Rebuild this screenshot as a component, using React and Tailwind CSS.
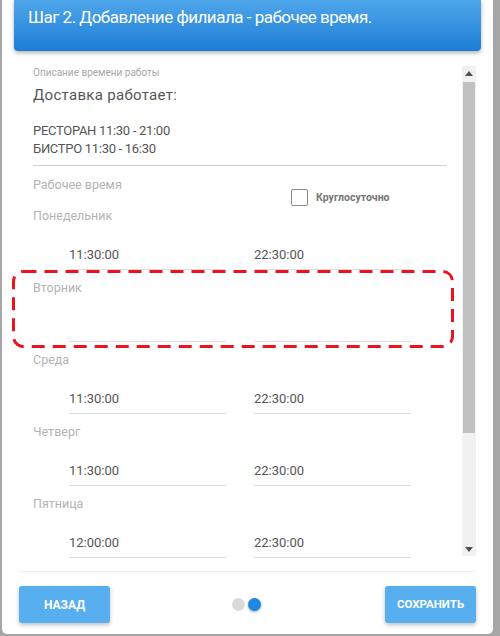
import React from 'react';

const days = [
    { name: 'Понедельник', from: '11:30:00', to: '22:30:00' },
    { name: 'Вторник', from: '', to: '' },
    { name: 'Среда', from: '11:30:00', to: '22:30:00' },
    { name: 'Четверг', from: '11:30:00', to: '22:30:00' },
    { name: 'Пятница', from: '12:00:00', to: '22:30:00' },
];

const DayRow = ({ day, first }) => (
    <div className={first ? '' : 'mt-[9px]'}>
        <div className="text-[12.5px] leading-[18px] text-[#b3b3b3]">{day.name}</div>
        <div className="mt-[16px] flex pl-[36px] gap-[28px]">
            <div className="w-[157px] h-[29px] border-b border-[#dcdcdc] text-[13px] leading-[28px] text-[#555]">{day.from}</div>
            <div className="w-[157px] h-[29px] border-b border-[#dcdcdc] text-[13px] leading-[28px] text-[#555]">{day.to}</div>
        </div>
    </div>
);

const App = () => {
    return (
        <div className="w-[500px] h-[636px] bg-[#a6a6a6] overflow-hidden flex" style={{ fontFamily: 'Roboto, "Noto Sans", sans-serif' }}>
            <div className="ml-[2px] w-[491px] h-[634px] bg-white rounded-b-[5px] relative flex flex-col">
                {/* header */}
                <div className="mx-[12px] h-[51px] rounded-b-[4px] bg-gradient-to-b from-[#4ea6ea] to-[#1a7dd5] shadow-[0_2px_4px_rgba(0,0,0,0.3)] px-[14px] pt-[5px]">
                    <div className="text-[17px] leading-[24px] tracking-[-0.5px] text-white">Шаг 2. Добавление филиала - рабочее время.</div>
                </div>

                {/* body */}
                <div className="mt-[11px] h-[498px] flex overflow-hidden relative">
                    <div className="ml-[31px] w-[414px] pt-[4px]">
                        <div className="text-[10px] leading-[14px] text-[#a8a8a8]">Описание времени работы</div>
                        <div className="mt-[6px] pb-[7px] border-b border-[#cfcfcf] leading-[18px] text-[#555]">
                            <div className="text-[15px] tracking-[0.3px]">Доставка работает:</div>
                            <div className="h-[18px]" />
                            <div className="text-[13px] tracking-[-0.3px]">РЕСТОРАН 11:30 - 21:00</div>
                            <div className="text-[13px] tracking-[-0.3px]">БИСТРО 11:30 - 16:30</div>
                        </div>
                        <div className="mt-[10px] flex items-start">
                            <div className="w-[258px] text-[12.5px] leading-[18px] text-[#b3b3b3]">Рабочее время</div>
                            <div className="mt-[13px] flex items-center">
                                <div className="w-[17px] h-[17px] border border-[#8a8a8a] rounded-[2px]" />
                                <span className="ml-[8px] text-[10.5px] font-bold text-[#747474]">Круглосуточно</span>
                            </div>
                        </div>
                        <div className="mt-[1px]">
                            {days.map((d, i) => (
                                <DayRow key={d.name} day={d} first={i === 0} />
                            ))}
                        </div>
                    </div>

                    {/* scrollbar */}
                    <div className="ml-[15px] mt-[4px] w-[14px] h-[490px] bg-[#f1f1f1] flex flex-col items-center">
                        <div className="h-[14px] flex items-center justify-center">
                            <svg width="8" height="5" viewBox="0 0 8 5"><path d="M4 0 L8 5 L0 5 Z" fill="#505050" /></svg>
                        </div>
                        <div className="mt-[2px] w-[12px] h-[351px] bg-[#c1c1c1]" />
                        <div className="mt-auto mb-[4px]">
                            <svg width="8" height="5" viewBox="0 0 8 5"><path d="M0 0 L8 0 L4 5 Z" fill="#505050" /></svg>
                        </div>
                    </div>

                    {/* annotation */}
                    <svg className="absolute left-[10px] top-[208px]" width="442" height="78">
                        <rect x="1.5" y="1.5" width="439" height="75" rx="10" fill="none" stroke="#ea1420" strokeWidth="3" strokeDasharray="13 8" />
                    </svg>
                </div>

                {/* footer */}
                <div className="mx-[17px] mt-[11px] border-t border-[#ececec] pt-[14px] flex items-center justify-between">
                    <button className="w-[91px] h-[37px] rounded-[3px] bg-[#57afef] text-white text-[12px] font-bold shadow-[0_2px_4px_rgba(0,0,0,0.25)]">НАЗАД</button>
                    <div className="flex items-center gap-[3px] mr-[2px]">
                        <div className="w-[13px] h-[13px] rounded-full bg-[#d9d9d9]" />
                        <div className="w-[13px] h-[13px] rounded-full bg-[#1f87e0] shadow-[0_1px_3px_rgba(0,0,0,0.35)]" />
                    </div>
                    <button className="w-[91px] h-[37px] rounded-[3px] bg-[#57afef] text-white text-[11.5px] font-bold shadow-[0_2px_4px_rgba(0,0,0,0.25)]">СОХРАНИТЬ</button>
                </div>
            </div>
        </div>
    );
};

export default App;
